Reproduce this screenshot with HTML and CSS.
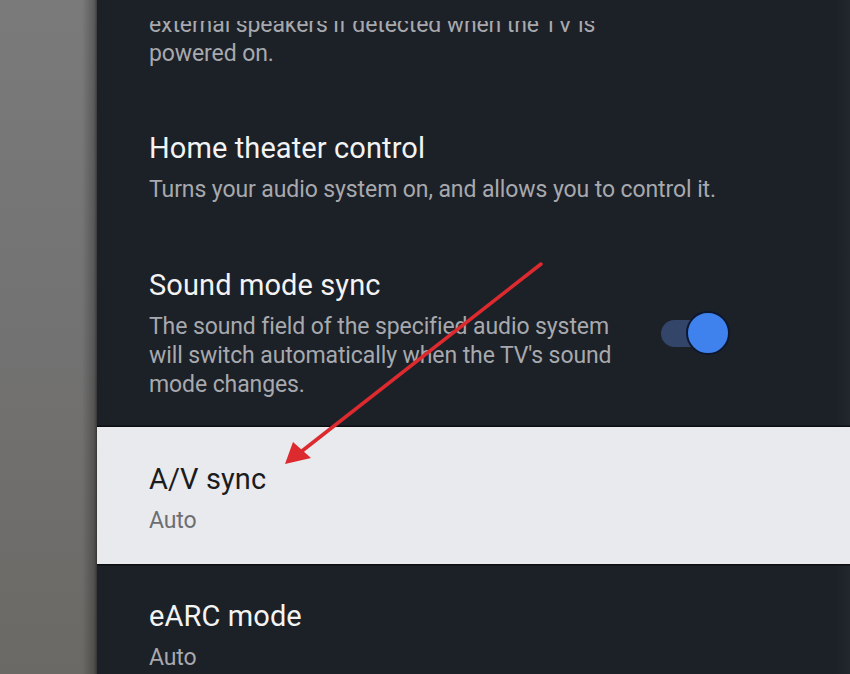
FILE: index.html
```html
<!DOCTYPE html>
<html lang="en">
<head>
<meta charset="utf-8">
<title>Sound settings</title>
<link rel="stylesheet" href="styles.css">
</head>
<body>
<div class="screen">
  <aside class="side"></aside>
  <main class="panel">
    <div class="panel-top"></div>
    <div class="viewport">
      <div class="list">
        <div class="row row-partial">
          <p class="desc">external speakers if detected when the TV is<br>powered on.</p>
        </div>
        <div class="row">
          <h2 class="title">Home theater control</h2>
          <p class="desc">Turns your audio system on, and allows you to control it.</p>
        </div>
        <div class="row row-toggle">
          <div class="text">
            <h2 class="title">Sound mode sync</h2>
            <p class="desc">The sound field of the specified audio system<br>will switch automatically when the TV's sound<br>mode changes.</p>
          </div>
          <div class="toggle on"><span class="track"></span><span class="thumb"></span></div>
        </div>
        <div class="row row-focused">
          <h2 class="title">A/V sync</h2>
          <p class="desc">Auto</p>
        </div>
        <div class="row">
          <h2 class="title">eARC mode</h2>
          <p class="desc">Auto</p>
        </div>
      </div>
    </div>
  </main>
  <svg class="arrow" width="850" height="674" viewBox="0 0 850 674" aria-hidden="true">
    <line x1="541" y1="264" x2="302" y2="451" stroke="#dc2a2f" stroke-width="3.5" stroke-linecap="round"/>
    <polygon points="285,464 293,442 311,458" fill="#dc2a2f"/>
  </svg>
</div>
</body>
</html>
```

FILE: styles.css
```css
* { box-sizing: border-box; }
html, body { margin: 0; padding: 0; }
body {
  width: 850px;
  height: 674px;
  overflow: hidden;
  background: #1c2027;
  font-family: Roboto, "Noto Sans", "Liberation Sans", sans-serif;
}
.screen {
  position: relative;
  display: flex;
  width: 850px;
  height: 674px;
}
.side {
  width: 97px;
  flex: none;
  background:
    linear-gradient(90deg, rgba(0,0,0,0) 0, rgba(0,0,0,0) 82px, rgba(0,0,0,0.25) 94px, rgba(0,0,0,0.5) 97px),
    linear-gradient(180deg, #7a7a7a 0%, #737373 45%, #6b6965 100%);
}
.panel {
  flex: 1;
  display: flex;
  flex-direction: column;
  background: linear-gradient(90deg, #1c2027 0, #1c2027 738px, #22262d 753px);
  min-width: 0;
}
.panel-top {
  height: 21px;
  flex: none;
}
.viewport {
  flex: 1;
  overflow: hidden;
}
.list {
  margin-top: -11.5px;
}
.row {
  padding: 35px 0 28.5px 52px;
}
.row-partial {
  padding-top: 0;
}
.title {
  margin: 0 0 10px;
  font-size: 29px;
  line-height: 34px;
  font-weight: 400;
  letter-spacing: 0.1px;
  color: #f3f3f3;
}
.desc {
  margin: 0;
  font-size: 23px;
  line-height: 29px;
  color: #a7a9ae;
  letter-spacing: -0.1px;
}
.row-toggle {
  display: flex;
  align-items: center;
}
.row-toggle .text {
  flex: 1;
}
.toggle {
  position: relative;
  width: 70px;
  height: 46px;
  margin-right: 119px;
  flex: none;
}
.track {
  position: absolute;
  left: 0;
  top: 10px;
  width: 52px;
  height: 27px;
  border-radius: 14px;
  background: #34456a;
}
.thumb {
  position: absolute;
  left: 25px;
  top: 1px;
  width: 44px;
  height: 44px;
  border-radius: 50%;
  background: #3f82ee;
  border: 2px solid #0c1730;
}
.row-focused {
  background: #e9eaed;
  box-shadow: 0 0 0 1.5px #0d0e11;
}
.row-focused .title {
  color: #1b1c1e;
}
.row-focused .desc {
  color: #6d6e72;
}
.arrow {
  position: absolute;
  left: 0;
  top: 0;
  pointer-events: none;
  z-index: 5;
}
```
